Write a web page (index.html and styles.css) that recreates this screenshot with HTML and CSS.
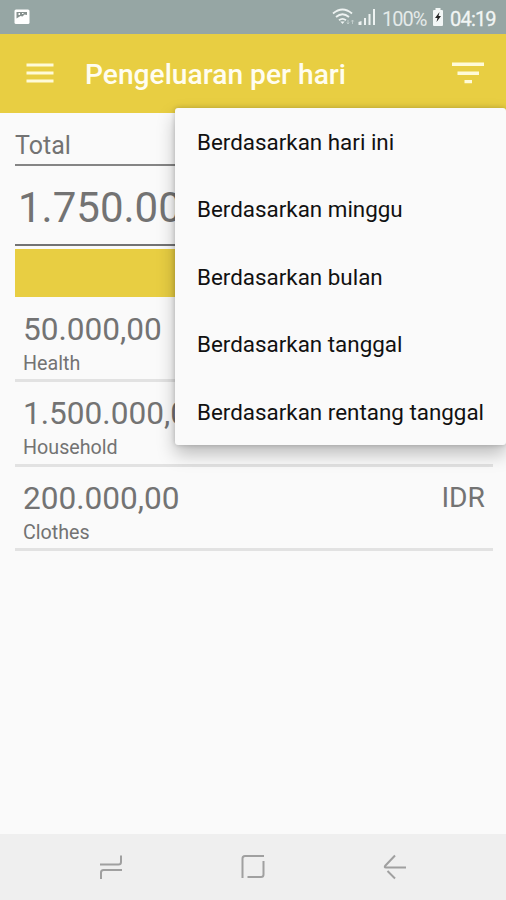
FILE: index.html
```html
<!DOCTYPE html>
<html lang="id">
<head>
  <meta charset="UTF-8">
  <meta name="viewport" content="width=device-width, initial-scale=1.0">
  <title>Pengeluaran per hari</title>
  <link rel="stylesheet" href="styles.css">
</head>
<body>
  <div class="status-bar">
    <svg class="notif" width="16" height="16" viewBox="0 0 16 16">
      <rect x="0.5" y="0.5" width="15" height="14.5" rx="1.5" fill="#fff"/>
      <path d="M2.500 3h10.500v3l-2.500-0.500-2 2-2-0.500-4 2.500z" fill="#87918f"/>
      <path d="M4.500 4h1.500v2H4.500zM8 4h1.500v1H8z" fill="#fff"/>
    </svg>
    <div class="status-right">
      <svg width="24" height="18" viewBox="0 0 24 18" fill="none" stroke="#eef3f2" stroke-width="1.8">
        <path d="M1 5.5Q10.500 -2.500 20 5.500M4 9Q10.500 3.500 17 9M7 12.200Q10.500 9.500 14 12.200"/>
        <path d="M8.300 13.500h4.400l-2.200 2.500z" fill="#eef3f2" stroke="none"/>
        <path d="M16 12v4M14.800 14.500l1.200 1.500 1.200-1.500M20.500 16v-4M19.300 13.500l1.200-1.500 1.200 1.500" stroke="#c5d0ce" stroke-width="0.900"/>
      </svg>
      <svg class="signal" width="18" height="18" viewBox="0 0 18 18" fill="#eef3f2">
        <path d="M0.500 17v-3l3-1v4zM6 10h2v7H6zM10.500 6h2v11h-2zM15 1h2v16h-2z"/>
      </svg>
      <span class="percent">100%</span>
      <svg class="battery" width="12" height="18" viewBox="0 0 12 18">
        <path d="M3.500 0h5v2H10a1 1 0 0 1 1 1v14a1 1 0 0 1-1 1H2a1 1 0 0 1-1-1V3a1 1 0 0 1 1-1h1.500z" fill="#f3f7f6"/>
        <path d="M7.500 4L3 10h2.500L4.500 14 9 8H6.500z" fill="#222"/>
      </svg>
      <span class="clock">04:19</span>
    </div>
  </div>

  <div class="toolbar">
    <svg width="28" height="20" viewBox="0 0 28 20" fill="#fffbd8">
      <path d="M0.500 0.500h27v3h-27zM0.500 8.500h27v3h-27zM0.500 16.500h27v3h-27z"/>
    </svg>
    <h1>Pengeluaran per hari</h1>
    <svg class="filter" width="34" height="24" viewBox="0 0 34 24" fill="#fffbd8">
      <path d="M1 1.500h32v3.500H1zM6.500 10.500h21.500v3.500H6.500zM13.500 19h7.500v3.300h-7.500z"/>
    </svg>

    <ul class="menu">
      <li>Berdasarkan hari ini</li>
      <li>Berdasarkan minggu</li>
      <li>Berdasarkan bulan</li>
      <li>Berdasarkan tanggal</li>
      <li>Berdasarkan rentang tanggal</li>
    </ul>
  </div>

  <div class="content">
    <div class="total-label">Total</div>
    <div class="total-value">1.750.000,00</div>
    <div class="band"></div>
    <div class="row">
      <div>
        <div class="amount">50.000,00</div>
        <div class="category">Health</div>
      </div>
    </div>
    <div class="row">
      <div>
        <div class="amount">1.500.000,00</div>
        <div class="category">Household</div>
      </div>
    </div>
    <div class="row">
      <div>
        <div class="amount">200.000,00</div>
        <div class="category">Clothes</div>
      </div>
      <div class="currency">IDR</div>
    </div>
  </div>

  <div class="nav-bar">
    <svg width="24" height="26" viewBox="0 0 24 26">
      <path d="M1 10.500h18.500q2.500 0 2.500-2.500V1.500M23 16H4.500Q2 16 2 18.500V25"/>
    </svg>
    <svg width="24" height="26" viewBox="0 0 24 26">
      <path d="M1.500 24V4.500q0-2.500 2.500-2.500H23M22.500 7v13.500q0 2.500-2.500 2.500H6.500"/>
    </svg>
    <svg width="24" height="26" viewBox="0 0 24 26">
      <path d="M23 13.500H3Q0.800 13.500 2.500 11.500L12 1.500M4.500 17L12 24.500"/>
    </svg>
  </div>
</body>
</html>
```

FILE: styles.css
```css
* {
  box-sizing: border-box;
}
body {
  margin: 0;
  height: 900px;
  display: flex;
  flex-direction: column;
  font-family: Roboto, sans-serif;
  background: #fafafa;
  color: #737373;
  overflow: hidden;
}
.status-bar {
  height: 34px;
  flex: none;
  display: flex;
  justify-content: space-between;
  align-items: center;
  padding: 0 10px 0 14px;
  background: #96a6a4;
  color: #f1f5f4;
}
.status-right {
  display: flex;
  align-items: center;
}
.signal {
  margin: 0 6px 0 2px;
}
.percent,
.clock {
  font-size: 20px;
  line-height: 34px;
  padding-top: 3px;
  white-space: nowrap;
}
.percent {
  width: 45px;
  letter-spacing: -1px;
  color: #e4eae9;
}
.battery {
  margin: 0 6px 0 5px;
}
.clock {
  width: 46px;
  letter-spacing: -0.8px;
  -webkit-text-stroke: 0.3px #f1f5f4;
}
.toolbar {
  position: relative;
  height: 78.500px;
  flex: none;
  display: flex;
  align-items: center;
  padding: 0 21px 0 26px;
  background: #e8ce42;
}
.toolbar h1 {
  margin: 2px auto 0 31px;
  font-size: 28.200px;
  font-weight: 500;
  color: #fffdf0;
  white-space: nowrap;
}
.menu {
  position: absolute;
  top: 74px;
  right: 0;
  width: 331px;
  margin: 0;
  padding: 0 0 0 22px;
  list-style: none;
  background: #fafafa;
  color: #111;
  border-radius: 3px;
  box-shadow: 0 9px 18px rgba(0, 0, 0, 0.25), 0 0 5px rgba(0, 0, 0, 0.2);
}
.menu li {
  height: 67.400px;
  line-height: 68px;
  font-size: 22.400px;
  white-space: nowrap;
}
.content {
  flex: 1;
  padding: 0 13px 0 15px;
}
.total-label {
  height: 53.500px;
  padding-top: 17px;
  font-size: 25px;
  line-height: 32px;
  border-bottom: 2px solid #858585;
}
.total-value {
  height: 80px;
  padding-left: 3px;
  font-size: 42px;
  line-height: 83px;
  border-bottom: 2px solid #737373;
}
.band {
  height: 48px;
  margin: 3px 0 1px;
  background: #e8ce42;
}
.row {
  height: 84.400px;
  display: flex;
  justify-content: space-between;
  padding: 13px 8px 0;
  border-bottom: 3px solid #e2e2e2;
}
.row .amount {
  font-size: 31.600px;
  line-height: 38px;
}
.row .category {
  font-size: 19.700px;
  line-height: 30px;
}
.row .currency {
  font-size: 28.200px;
  line-height: 35px;
}
.nav-bar {
  height: 66px;
  flex: none;
  display: flex;
  justify-content: center;
  align-items: center;
  gap: 118px;
  background: #efefef;
}
.nav-bar svg {
  fill: none;
  stroke: #a0a0a0;
  stroke-width: 2;
}
```
